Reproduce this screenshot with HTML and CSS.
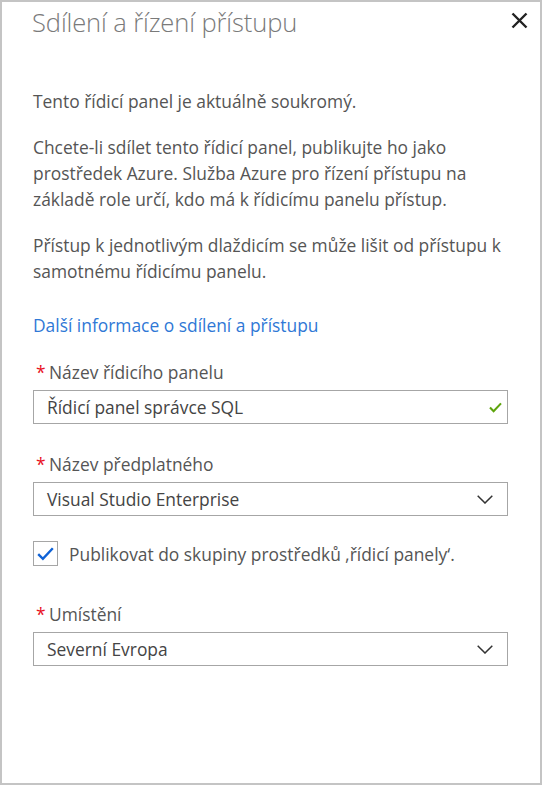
FILE: index.html
```html
<!DOCTYPE html>
<html lang="cs">
<head>
<meta charset="utf-8">
<link rel="stylesheet" href="styles.css">
</head>
<body>
<div class="frame">
  <div class="header">
    <h1 class="title">Sdílení a řízení přístupu</h1>
    <button class="close" aria-label="Zavřít">
      <svg width="17" height="17" viewBox="0 0 17 17"><path d="M1.5 1.5 L15.5 15.5 M15.5 1.5 L1.5 15.5" stroke="#222" stroke-width="2.4" fill="none"/></svg>
    </button>
  </div>
  <div class="content">
    <p class="para">Tento řídicí panel je aktuálně soukromý.</p>
    <p class="para">Chcete-li sdílet tento řídicí panel, publikujte ho jako prostředek Azure. Služba Azure pro řízení přístupu na základě role určí, kdo má k řídicímu panelu přístup.</p>
    <p class="para">Přístup k jednotlivým dlaždicím se může lišit od přístupu k samotnému řídicímu panelu.</p>
    <a class="link" href="#">Další informace o sdílení a přístupu</a>

    <div class="field first">
      <div class="label"><span class="req">*</span>Název řídicího panelu</div>
      <div class="box box-valid">
        <span class="value">Řídicí panel správce SQL</span>
        <svg class="valid" width="13" height="11" viewBox="0 0 13 11"><path d="M1 5.6 L4.6 9.2 L12 1.4" stroke="#5ea40d" stroke-width="2.1" fill="none"/></svg>
      </div>
    </div>

    <div class="field">
      <div class="label"><span class="req">*</span>Název předplatného</div>
      <div class="box">
        <span class="value">Visual Studio Enterprise</span>
        <svg class="chev" width="16" height="9" viewBox="0 0 16 9"><path d="M0.7 0.7 L8 8 L15.3 0.7" stroke="#333" stroke-width="1.5" fill="none"/></svg>
      </div>
    </div>

    <div class="check-row">
      <span class="checkbox">
        <svg width="17" height="14" viewBox="0 0 17 14"><path d="M1.2 7.2 L5.9 11.8 L15.8 1.2" stroke="#0f62d6" stroke-width="2.4" fill="none"/></svg>
      </span>
      <span class="check-label">Publikovat do skupiny prostředků ‚řídicí panely‘.</span>
    </div>

    <div class="field last">
      <div class="label"><span class="req">*</span>Umístění</div>
      <div class="box">
        <span class="value">Severní Evropa</span>
        <svg class="chev" width="16" height="9" viewBox="0 0 16 9"><path d="M0.7 0.7 L8 8 L15.3 0.7" stroke="#333" stroke-width="1.5" fill="none"/></svg>
      </div>
    </div>
  </div>
</div>
</body>
</html>
```

FILE: styles.css
```css
* { box-sizing: border-box; }
html, body { margin: 0; padding: 0; background: #fff; }
body {
  font-family: "Open Sans", "Noto Sans", "Liberation Sans", sans-serif;
  color: #555;
}
.frame {
  width: 542px;
  height: 785px;
  border: 2px solid #c4c4c4;
  background: #fff;
  overflow: hidden;
}
.header {
  display: flex;
  align-items: flex-start;
  justify-content: space-between;
  padding: 0 12px 0 30px;
}
.title {
  margin: 0;
  font-size: 25.5px;
  font-weight: 300;
  color: #7a7a7a;
  line-height: 40px;
  letter-spacing: -0.1px;
}
.close {
  border: 0;
  background: none;
  padding: 0;
  margin-top: 10px;
  width: 17px;
  height: 17px;
  display: block;
}
.close svg { display: block; }
.content {
  padding: 46px 32px 0 31px;
  font-size: 17.4px;
}
.para {
  margin: 0 0 20px;
  line-height: 26px;
}
.para:nth-of-type(3) { margin-bottom: 0; }
.link {
  display: block;
  color: #2f78d6;
  text-decoration: none;
  line-height: 26px;
  margin-top: 28px;
}
.field { margin-top: 29px; }
.field.first { margin-top: 23px; }
.field.last { margin-top: 37px; }
.label {
  line-height: 22px;
  display: flex;
  align-items: baseline;
}
.req {
  color: #e81123;
  width: 16px;
  padding-left: 3px;
}
.box {
  margin-top: 7px;
  height: 34px;
  border: 1px solid #a6a6a6;
  display: flex;
  align-items: center;
  justify-content: space-between;
  padding: 0 14px 0 13px;
}
.box-valid { padding-right: 5px; }
.value { color: #444; }
.valid { display: block; }
.chev { display: block; }
.check-row {
  display: flex;
  align-items: center;
  margin-top: 25px;
  gap: 11px;
}
.checkbox {
  width: 25px;
  height: 25px;
  border: 1px solid #a6a6a6;
  display: flex;
  align-items: center;
  justify-content: center;
}
.checkbox svg { display: block; }
.check-label { color: #555; }
```
